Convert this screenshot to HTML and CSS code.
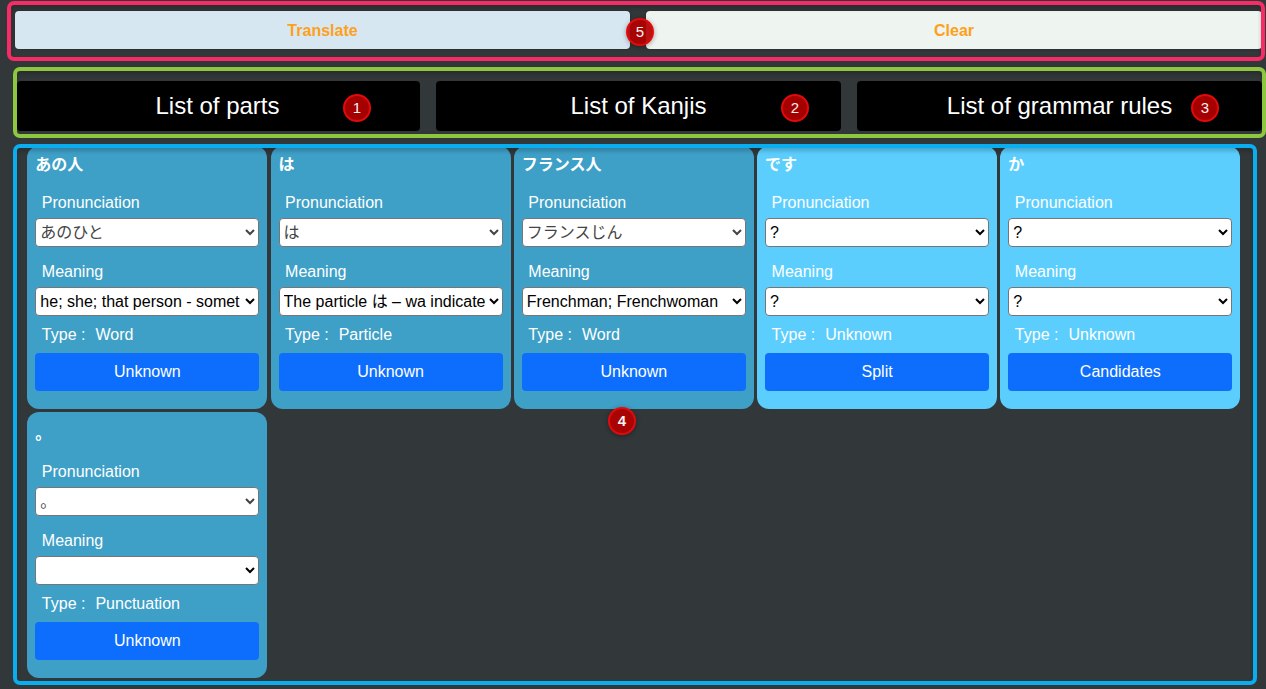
FILE: index.html

```html
<!DOCTYPE html>
<html lang="en">
<head>
  <meta charset="UTF-8" />
  <meta name="viewport" content="width=device-width, initial-scale=1.0" />
  <title>Japanese sentence parser</title>
  <link rel="stylesheet" href="styles.css">
</head>
<body>
  <section class="frame actions">
    <button class="action translate" type="button">Translate</button>
    <button class="action clear" type="button">Clear</button>
    <span class="badge badge-5">5</span>
  </section>

  <section class="frame tabs">
    <button class="tab tab-first" type="button">List of parts</button>
    <button class="tab" type="button">List of Kanjis</button>
    <button class="tab" type="button">List of grammar rules</button>
    <span class="badge badge-1">1</span>
    <span class="badge badge-2">2</span>
    <span class="badge badge-3">3</span>
  </section>

  <section class="frame parts">
    <div class="card known">
      <h2>あの人</h2>
      <label>Pronunciation</label>
      <select class="kana"><option>あのひと</option></select>
      <label>Meaning</label>
      <select><option>he; she; that person - somet</option></select>
      <p class="type">Type :<span>Word</span></p>
      <button class="part-btn" type="button">Unknown</button>
    </div>
    <div class="card known">
      <h2>は</h2>
      <label>Pronunciation</label>
      <select class="kana"><option>は</option></select>
      <label>Meaning</label>
      <select><option>The particle は – wa indicates the topic</option></select>
      <p class="type">Type :<span>Particle</span></p>
      <button class="part-btn" type="button">Unknown</button>
    </div>
    <div class="card known">
      <h2>フランス人</h2>
      <label>Pronunciation</label>
      <select class="kana"><option>フランスじん</option></select>
      <label>Meaning</label>
      <select><option>Frenchman; Frenchwoman</option></select>
      <p class="type">Type :<span>Word</span></p>
      <button class="part-btn" type="button">Unknown</button>
    </div>
    <div class="card unknown">
      <h2>です</h2>
      <label>Pronunciation</label>
      <select><option>?</option></select>
      <label>Meaning</label>
      <select><option>?</option></select>
      <p class="type">Type :<span>Unknown</span></p>
      <button class="part-btn" type="button">Split</button>
    </div>
    <div class="card unknown">
      <h2>か</h2>
      <label>Pronunciation</label>
      <select><option>?</option></select>
      <label>Meaning</label>
      <select><option>?</option></select>
      <p class="type">Type :<span>Unknown</span></p>
      <button class="part-btn" type="button">Candidates</button>
    </div>
    <div class="card known punct">
      <h2>。</h2>
      <label>Pronunciation</label>
      <select class="kana"><option>。</option></select>
      <label>Meaning</label>
      <select><option></option></select>
      <p class="type">Type :<span>Punctuation</span></p>
      <button class="part-btn" type="button">Unknown</button>
    </div>
    <span class="badge badge-4">4</span>
  </section>
</body>
</html>
```

FILE: styles.css

```css
* {
  box-sizing: border-box;
}
html, body {
  height: 100%;
}
body {
  margin: 0;
  background: #32373a;
  color: white;
  font-family: "Liberation Sans", "Noto Sans CJK JP", Arial, sans-serif;
  font-size: 16px;
  overflow: hidden;
}

/* coloured annotation frames sit on top of the content */
.frame {
  position: relative;
}
.frame::after {
  content: "";
  position: absolute;
  inset: 0;
  border-width: 4px;
  border-style: solid;
  border-radius: 7px;
  box-shadow: inset 0 3px 4px rgba(0, 0, 0, 0.2);
  pointer-events: none;
}

.actions {
  display: flex;
  gap: 16px;
  height: 60px;
  margin: 1px 1px 0 7px;
  padding: 10px 3px 12px 8px;
}
.actions::after {
  border-color: #f72c67;
}
.action {
  padding-top: 3px;
  border: none;
  border-radius: 4px;
  color: #ffa01a;
  font: bold 16px "Liberation Sans", Arial, sans-serif;
  box-shadow: 0 0 3px rgba(0, 0, 0, 0.25);
}
.translate {
  flex: 0 0 615px;
  background: #d7e7f2;
}
.clear {
  flex: 1;
  background: #eef4ef;
}

.tabs {
  display: flex;
  gap: 16px;
  height: 71px;
  margin: 6px 0 0 13px;
  padding: 14px 4px 7px 4px;
}
.tabs::after {
  border-color: #8dc63f;
}
.tab {
  flex: 1;
  border: none;
  border-radius: 4px;
  background: black;
  color: white;
  font: 24px "Liberation Sans", Arial, sans-serif;
}
.tab-first {
  flex: 0 0 403px;
  padding-right: 8px;
}

.parts {
  display: grid;
  grid-template-columns: repeat(5, 240.25px);
  grid-auto-rows: min-content;
  align-content: start;
  gap: 3px;
  height: 541px;
  margin: 6px 9px 0 13px;
  padding: 2px 0 0 14.35px;
}
.parts::after {
  border-color: #0aaeef;
}

.card {
  width: 240px;
  height: 263px;
  padding: 10px 8px 0 8px;
  border-radius: 12px;
}
.known {
  background: #3e9fc7;
}
.unknown {
  background: #5bcefe;
}
.punct {
  height: 266px;
  padding-top: 13px;
}
.card h2 {
  height: 34px;
  margin: 0;
  font-size: 16px;
  line-height: 18px;
}
.card label {
  display: block;
  height: 24px;
  margin: 0 0 4px 6.5px;
  line-height: 26px;
}
.card select {
  display: block;
  width: 224px;
  height: 29px;
  margin-bottom: 12px;
  background: white;
  border: 1px solid #767676;
  border-radius: 4px;
  color: black;
  font: 16px "Liberation Sans", "Noto Sans CJK JP", Arial, sans-serif;
}
.card select.kana {
  color: #444;
}
.type {
  height: 31px;
  margin: -6px 0 0 6.5px;
  line-height: 26px;
}
.type span {
  margin-left: 10px;
}
.part-btn {
  display: block;
  width: 224px;
  height: 38px;
  border: none;
  border-radius: 4px;
  background: #0d6efd;
  color: white;
  font: 16px "Liberation Sans", Arial, sans-serif;
}

.badge {
  position: absolute;
  z-index: 2;
  width: 28px;
  height: 28px;
  border: 2px solid #e20a0a;
  border-radius: 50%;
  background: rgba(178, 0, 0, 0.92);
  color: #f2f2f2;
  font-size: 15px;
  line-height: 24px;
  text-align: center;
  box-shadow: 0 1px 5px rgba(0, 0, 0, 0.35);
}
.badge-5 {
  left: 619px;
  top: 17px;
}
.badge-1 {
  left: 330px;
  top: 27px;
}
.badge-2 {
  left: 768px;
  top: 27px;
}
.badge-3 {
  left: 1178px;
  top: 27px;
}
.badge-4 {
  left: 595px;
  top: 263px;
  font-weight: bold;
}
```
